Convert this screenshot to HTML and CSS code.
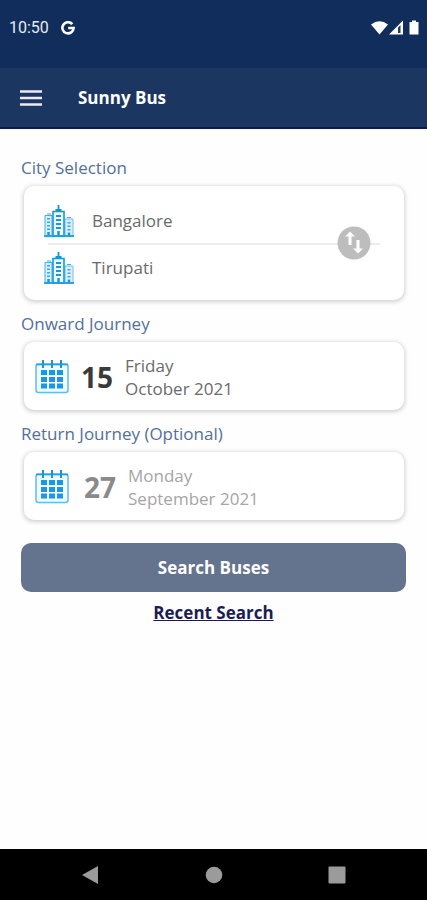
FILE: index.html
```html
<!DOCTYPE html>
<html lang="en">
<head>
<meta charset="utf-8">
<meta name="viewport" content="width=device-width, initial-scale=1">
<title>Sunny Bus</title>
<link rel="stylesheet" href="styles.css">
</head>
<body>
<svg class="defs" aria-hidden="true">
  <symbol id="city" viewBox="0 0 30 32">
    <path d="M1 10.500h7V31H1z" fill="#d9f0fc" stroke="#41aee8"/>
    <path d="M21 14h8v17h-8z" fill="#d9f0fc" stroke="#7fb9ee"/>
    <path d="M9 6.500h11V31H9z" fill="#eefaff" stroke="#0f9ae0" stroke-width="1.600"/>
    <path d="M14.500 0v6M11.500 5h6" stroke="#1497d4" stroke-width="1.800"/>
    <path d="M3 9h4M23 12.500h4" stroke="#41aee8"/>
    <path d="M4.500 13v13M25 17v11" stroke="#3fa9e6" stroke-width="3" stroke-dasharray="1.500 2"/>
    <path d="M14.500 10v15" stroke="#1898dc" stroke-width="5" stroke-dasharray="2 2"/>
    <path d="M4.500 27v4M14.500 26v5M25 28v3" stroke="#1898dc" stroke-width="2.500"/>
    <path d="M0 31h30" stroke="#1c9fe4" stroke-width="1.800"/>
  </symbol>
  <symbol id="calendar" viewBox="0 0 34 34">
    <rect x="1" y="4" width="32" height="28.500" rx="2.500" fill="#f2fbff" stroke="#5dbcf3" stroke-width="1.500"/>
    <path d="M1 4.500h32" stroke="#229fe6" stroke-width="1.600"/>
    <path d="M8 0v8M17 0v8M26 0v8" stroke="#1c93d2" stroke-width="2"/>
    <path d="M6 12.500h22M6 19.500h22M6 26h22" stroke="#1798ea" stroke-width="5" stroke-dasharray="6 2"/>
  </symbol>
</svg>
<div class="screen">
  <div class="status">
    <span class="time">10:50</span>
    <svg class="google" viewBox="0 0 14 14" aria-hidden="true"><path d="M11.300 3.200A5.600 5.600 0 1 0 12.600 7H7.200" fill="none" stroke="#fff" stroke-width="2.600"/></svg>
    <svg class="signals" viewBox="0 0 50 16" aria-hidden="true">
      <path d="M0 4.500Q8.500-2 17 4.500L8.500 14.500z" fill="#fff"/>
      <path d="M18 14.500 32 .5v14z" fill="#fff"/>
      <path d="M27 7.500v5.500h2.500V5z" fill="#1f3a66"/>
      <path d="M41 .5h4V2h2.500v12.500h-9V2H41z" fill="#fff"/>
    </svg>
  </div>
  <header class="appbar">
    <button class="menu" type="button" aria-label="Menu"><svg viewBox="0 0 22 16"><path d="M0 1.500h22M0 8h22M0 14.500h22" stroke="#eceaf5" stroke-width="2.600"/></svg></button>
    <h1>Sunny Bus</h1>
  </header>
  <main>
    <h2 id="l-city">City Selection</h2>
    <section class="card cities" aria-labelledby="l-city">
      <button class="city" type="button"><svg viewBox="0 0 30 32"><use href="#city"/></svg>Bangalore</button>
      <div class="divider"></div>
      <button class="city" type="button"><svg viewBox="0 0 30 32"><use href="#city"/></svg>Tirupati</button>
      <button class="swap" type="button" aria-label="Swap cities"><svg viewBox="0 0 34 34"><circle cx="17" cy="17" r="16.500" fill="#bdbdbd"/><path d="M13 5.500 18 10.500H14.500V19h-3v-8.500H8zM19.500 14h3v8.500H26l-5 5-5-5h3.500z" fill="#fff"/></svg></button>
    </section>
    <h2 id="l-onward">Onward Journey</h2>
    <button class="card date" type="button" aria-describedby="l-onward">
      <svg viewBox="0 0 34 34"><use href="#calendar"/></svg>
      <strong>15</strong>
      <span>Friday<br>October 2021</span>
    </button>
    <h2 id="l-return">Return Journey (Optional)</h2>
    <button class="card date unset" type="button" aria-describedby="l-return">
      <svg viewBox="0 0 34 34"><use href="#calendar"/></svg>
      <strong>27</strong>
      <span>Monday<br>September 2021</span>
    </button>
    <button class="search" type="button">Search Buses</button>
    <a class="recent" href="#recent">Recent Search</a>
  </main>
  <nav class="system" aria-label="System">
    <button type="button" aria-label="Back"><svg viewBox="0 0 18 20"><path d="M0 10 16 1v18z" fill="#9b9b9b"/></svg></button>
    <button type="button" aria-label="Home"><svg viewBox="0 0 18 20"><circle cx="9" cy="10" r="8.300" fill="#9b9b9b"/></svg></button>
    <button type="button" aria-label="Overview"><svg viewBox="0 0 18 20"><rect x=".5" y="1.500" width="17" height="17" rx="1" fill="#9b9b9b"/></svg></button>
  </nav>
</div>
</body>
</html>
```

FILE: styles.css
```css
* { box-sizing: border-box; }
body {
  margin: 0;
  background: #fefefe;
  color: #6a6a6a;
  font: 17px/24px "Open Sans", sans-serif;
}
.defs { position: absolute; width: 0; height: 0; }
svg { display: block; flex: none; }
button {
  margin: 0;
  padding: 0;
  border: 0;
  background: none;
  color: inherit;
  font: inherit;
  text-align: left;
  cursor: pointer;
}
.screen { display: flex; flex-direction: column; min-height: 100vh; }
.status {
  display: flex;
  align-items: center;
  height: 68px;
  padding: 0 6px 12px 9px;
  background: #102d5b;
  color: #e6ebf5;
}
.time { font: 16px/24px Roboto, sans-serif; }
.google { width: 14px; height: 14px; margin-left: 12px; }
.signals { width: 50px; height: 16px; margin-left: auto; }
.appbar {
  display: flex;
  align-items: center;
  gap: 36px;
  height: 61px;
  padding: 1px 20px 0;
  border-bottom: 2px solid #0b1a50;
  background: #1c3662;
}
.menu svg { width: 22px; height: 16px; }
h1 { margin: 0; color: #fff; font-size: 17px; font-weight: 700; }
main {
  flex: 1;
  display: flex;
  flex-direction: column;
  padding: 15px 21px 24px;
}
h2 {
  margin: 12px 0 6px;
  color: #53709a;
  font-size: 17px;
  font-weight: 400;
}
.card {
  margin: 0 2px 0 3px;
  border-radius: 10px;
  background: #fff;
  box-shadow: 0 1px 4px 1px rgba(0, 0, 0, .18);
}
.cities { position: relative; padding: 12px 0 10px; }
.city {
  display: flex;
  align-items: center;
  gap: 18px;
  width: 100%;
  height: 45px;
  padding-left: 20px;
}
.city svg { width: 30px; height: 32px; }
.divider { height: 2px; margin: 0 24px; background: #ececec; }
.swap { position: absolute; top: 40px; right: 33px; }
.swap svg { width: 34px; height: 34px; }
.date {
  display: flex;
  align-items: center;
  height: 68px;
  padding: 1px 0 0 11px;
}
.date svg { width: 34px; height: 34px; }
.date strong { margin: 0 12px; color: #3a3a3a; font-size: 28px; }
.date span { line-height: 23px; }
.unset { color: #a5a5a5; }
.unset strong { margin-left: 15px; color: #8a8a8a; }
.search {
  height: 49px;
  margin: 23px 0 9px;
  border-radius: 10px;
  background: #64748e;
  color: #fff;
  font-weight: 700;
  text-align: center;
}
.recent { align-self: center; color: #1c1c54; font-weight: 700; }
.system {
  display: grid;
  grid-template-columns: repeat(3, 1fr);
  justify-items: center;
  align-items: center;
  height: 51px;
  padding: 0 29px;
  background: #000;
}
.system svg { width: 18px; height: 20px; }
```
